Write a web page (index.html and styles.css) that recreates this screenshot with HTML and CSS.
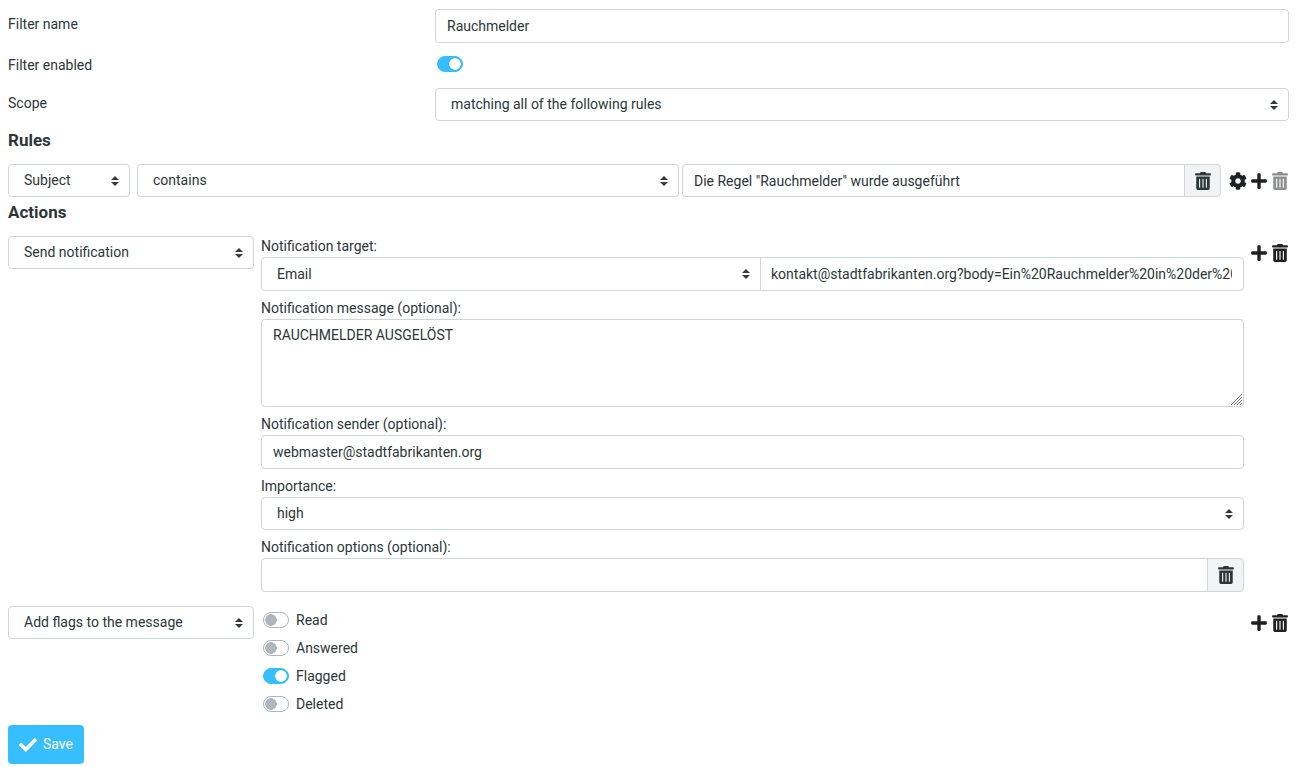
FILE: index.html
```html
<!DOCTYPE html>
<html lang="en">
<head>
<meta charset="UTF-8">
<title>Filters</title>
<link rel="stylesheet" href="styles.css">
</head>
<body>

<!-- Icon sprite -->
<svg class="sprite" aria-hidden="true">
    <symbol id="trash" viewBox="0 0 448 512"><path d="M32 464a48 48 0 0 0 48 48h288a48 48 0 0 0 48-48V128H32zm272-256a16 16 0 0 1 32 0v224a16 16 0 0 1-32 0zm-96 0a16 16 0 0 1 32 0v224a16 16 0 0 1-32 0zm-96 0a16 16 0 0 1 32 0v224a16 16 0 0 1-32 0zM432 32H312l-9.4-18.7A24 24 0 0 0 281.1 0H166.8a23.72 23.72 0 0 0-21.4 13.3L136 32H16A16 16 0 0 0 0 48v32a16 16 0 0 0 16 16h416a16 16 0 0 0 16-16V48a16 16 0 0 0-16-16z"/></symbol>
    <symbol id="plus" viewBox="0 0 448 512"><path d="M416 208H272V64c0-17.67-14.33-32-32-32h-32c-17.67 0-32 14.33-32 32v144H32c-17.67 0-32 14.33-32 32v32c0 17.67 14.33 32 32 32h144v144c0 17.67 14.33 32 32 32h32c17.67 0 32-14.33 32-32V304h144c17.67 0 32-14.33 32-32v-32c0-17.67-14.33-32-32-32z"/></symbol>
    <symbol id="cog" viewBox="0 0 512 512"><path d="M487.4 315.7l-42.6-24.6c4.3-23.2 4.3-47 0-70.2l42.6-24.6c4.9-2.8 7.1-8.6 5.5-14-11.1-35.6-30-67.8-54.7-94.6-3.8-4.1-10-5.1-14.8-2.3L380.8 110c-17.9-15.4-38.5-27.3-60.8-35.1V25.8c0-5.6-3.9-10.5-9.4-11.7-36.7-8.2-74.3-7.8-109.2 0-5.5 1.2-9.4 6.1-9.4 11.7V75c-22.2 7.9-42.8 19.8-60.8 35.1L88.7 85.5c-4.9-2.8-11-1.9-14.8 2.3-24.7 26.7-43.6 58.9-54.7 94.6-1.7 5.4.6 11.2 5.5 14L67.3 221c-4.3 23.2-4.3 47 0 70.2l-42.6 24.6c-4.9 2.8-7.1 8.6-5.5 14 11.1 35.6 30 67.8 54.7 94.6 3.8 4.1 10 5.1 14.8 2.3l42.6-24.6c17.9 15.4 38.5 27.3 60.8 35.1v49.2c0 5.6 3.9 10.5 9.4 11.7 36.7 8.2 74.3 7.8 109.2 0 5.5-1.2 9.4-6.1 9.4-11.7v-49.2c22.2-7.9 42.8-19.8 60.8-35.1l42.6 24.6c4.9 2.8 11 1.9 14.8-2.3 24.7-26.7 43.6-58.9 54.7-94.6 1.5-5.5-.7-11.3-5.6-14.1zM256 336c-44.1 0-80-35.9-80-80s35.9-80 80-80 80 35.9 80 80-35.9 80-80 80z"/></symbol>
    <symbol id="check" viewBox="0 0 512 512"><path d="M173.898 439.404l-166.4-166.4c-9.997-9.997-9.997-26.206 0-36.204l36.203-36.204c9.997-9.998 26.207-9.998 36.204 0L192 312.69 432.095 72.596c9.997-9.997 26.207-9.997 36.204 0l36.203 36.204c9.997 9.997 9.997 26.206 0 36.204l-294.4 294.401c-9.998 9.997-26.207 9.997-36.204-.001z"/></symbol>
</svg>

<form class="filter-form">
    <div class="basics">
        <div class="form-row">
            <label for="filterName">Filter name</label>
            <input type="text" class="control" id="filterName" value="Rauchmelder">
        </div>
        <div class="form-row switch-row">
            <label for="filterEnabled">Filter enabled</label>
            <input type="checkbox" class="switch" id="filterEnabled" checked>
        </div>
        <div class="form-row">
            <label for="scope">Scope</label>
            <select class="control" id="scope">
                <option>matching all of the following rules</option>
                <option>matching any of the following rules</option>
                <option>all messages</option>
            </select>
        </div>
    </div>

    <!-- Rules -->
    <section class="rules">
        <h2>Rules</h2>
        <div class="rule-row">
            <select class="control header-select" aria-label="Header">
                <option>Subject</option>
                <option>From</option>
                <option>To</option>
            </select>
            <div class="rule-match">
                <select class="control" aria-label="Operator">
                    <option>contains</option>
                    <option>not contains</option>
                </select>
                <div class="input-group">
                    <input type="text" class="control" aria-label="Value" value='Die Regel "Rauchmelder" wurde ausgeführt'>
                    <button type="button" class="addon" aria-label="Clear"><svg class="icon"><use href="#trash"/></svg></button>
                </div>
            </div>
            <div class="row-buttons">
                <button type="button" class="icon-btn" aria-label="Advanced options"><svg class="icon"><use href="#cog"/></svg></button>
                <button type="button" class="icon-btn" aria-label="Add rule"><svg class="icon"><use href="#plus"/></svg></button>
                <button type="button" class="icon-btn" aria-label="Delete rule" disabled><svg class="icon"><use href="#trash"/></svg></button>
            </div>
        </div>
    </section>

    <!-- Actions -->
    <section class="actions">
        <h2>Actions</h2>
        <div class="action-row">
            <select class="control action-select" aria-label="Action">
                <option>Send notification</option>
                <option>Add flags to the message</option>
            </select>
            <div class="action-data">
                <div class="field">
                    <label for="target">Notification target:</label>
                    <div class="input-group target-group">
                        <select class="control" id="target">
                            <option>Email</option>
                        </select>
                        <input type="text" class="control" aria-label="Target address" value="kontakt@stadtfabrikanten.org?body=Ein%20Rauchmelder%20in%20der%20">
                    </div>
                </div>
                <div class="field">
                    <label for="message">Notification message (optional):</label>
                    <textarea class="control" id="message">RAUCHMELDER AUSGELÖST</textarea>
                </div>
                <div class="field">
                    <label for="sender">Notification sender (optional):</label>
                    <input type="text" class="control" id="sender" value="webmaster@stadtfabrikanten.org">
                </div>
                <div class="field">
                    <label for="importance">Importance:</label>
                    <select class="control" id="importance">
                        <option>high</option>
                        <option>normal</option>
                        <option>low</option>
                    </select>
                </div>
                <div class="field">
                    <label for="options">Notification options (optional):</label>
                    <div class="input-group">
                        <input type="text" class="control" id="options">
                        <button type="button" class="addon" aria-label="Clear"><svg class="icon"><use href="#trash"/></svg></button>
                    </div>
                </div>
            </div>
            <div class="row-buttons">
                <button type="button" class="icon-btn" aria-label="Add action"><svg class="icon"><use href="#plus"/></svg></button>
                <button type="button" class="icon-btn" aria-label="Delete action"><svg class="icon"><use href="#trash"/></svg></button>
            </div>
        </div>

        <div class="action-row">
            <select class="control action-select" aria-label="Action">
                <option>Add flags to the message</option>
                <option>Send notification</option>
            </select>
            <div class="flags">
                <label class="flag"><input type="checkbox" class="switch"> Read</label>
                <label class="flag"><input type="checkbox" class="switch"> Answered</label>
                <label class="flag"><input type="checkbox" class="switch" checked> Flagged</label>
                <label class="flag"><input type="checkbox" class="switch"> Deleted</label>
            </div>
            <div class="row-buttons">
                <button type="button" class="icon-btn" aria-label="Add action"><svg class="icon"><use href="#plus"/></svg></button>
                <button type="button" class="icon-btn" aria-label="Delete action"><svg class="icon"><use href="#trash"/></svg></button>
            </div>
        </div>
    </section>

    <button type="submit" class="save-btn"><svg class="icon"><use href="#check"/></svg>Save</button>
</form>

</body>
</html>
```
FILE: styles.css
```css
:root {
    --text: #2c363a;
    --border: #ced4da;
    --blue: #37beff;
    --grey: #adb5bd;
    --radius: 4px;
}

* {
    margin: 0; padding: 0;
    box-sizing: border-box;
}

body {
    background: #fff;
    color: var(--text);
    font: 14px/21px Roboto, sans-serif;
}

.sprite {
    display: none;
}

.filter-form {
    padding: 9px 12px 3px 8px;
}

h2 {
    font-size: 17px;
    line-height: 23px;
    font-weight: 700;
    margin-bottom: 12px;
}

/* Form controls */
.control {
    display: block;
    width: 100%;
    min-width: 0;
    height: 34px;
    padding: 5px 11px;
    border: 1px solid var(--border);
    border-radius: var(--radius);
    background: #fff;
    color: var(--text);
    font: inherit;
}

select.control {
    appearance: none;
    height: 33px;
    padding: 0 22px 0 15px;
    background: #fff url("data:image/svg+xml,%3Csvg xmlns='http://www.w3.org/2000/svg' viewBox='0 0 4 5'%3E%3Cpath fill='%23343a40' d='M2 0L0 2h4zm0 5L0 3h4z'/%3E%3C/svg%3E") no-repeat right 10px center / 8px 10px;
}

textarea.control {
    height: 88px;
    resize: vertical;
}

textarea::-webkit-resizer {
    background: url("data:image/svg+xml,%3Csvg xmlns='http://www.w3.org/2000/svg' viewBox='0 0 11 11'%3E%3Cpath fill='none' stroke='%23777' d='M0 11L11 0M3 11L11 3M6 11L11 6M9 11L11 9'/%3E%3C/svg%3E") no-repeat right 1px bottom 1px / 11px 11px;
}

.input-group {
    display: flex;
}

.input-group .control {
    flex: 1;
    height: 34px;
}

.input-group > :not(:first-child) {
    margin-left: -1px;
    border-top-left-radius: 0;
    border-bottom-left-radius: 0;
}

.input-group > :not(:last-child) {
    border-top-right-radius: 0;
    border-bottom-right-radius: 0;
}

.target-group input.control {
    padding-left: 10px;
}

.addon {
    flex: none;
    display: flex;
    align-items: center;
    justify-content: center;
    width: 37px;
    border: 1px solid var(--border);
    border-radius: var(--radius);
    background: #f1f3f5;
    color: var(--text);
}

.icon {
    display: block;
    width: 18px;
    height: 18px;
    fill: currentColor;
}

.icon-btn {
    display: flex;
    align-items: center;
    justify-content: center;
    width: 21px;
    height: 33px;
    border: none;
    background: none;
    color: #1d2124;
    cursor: pointer;
}

.icon-btn:disabled {
    opacity: 0.5;
    cursor: default;
}

.row-buttons {
    display: flex;
    flex: none;
    margin-left: 4px;
}

/* Toggle switch */
.switch {
    appearance: none;
    flex: none;
    width: 26px;
    height: 16px;
    margin-left: 2px;
    border: 1px solid var(--grey);
    border-radius: 8px;
    background: #fff radial-gradient(circle closest-side, var(--grey) 92%, transparent) no-repeat 1px center / 12px 12px;
}

.switch:checked {
    border-color: var(--blue);
    background: var(--blue) radial-gradient(circle closest-side, #fff 92%, transparent) no-repeat 11px center / 12px 12px;
}

/* Name, state and scope */
.basics {
    display: grid;
    gap: 11px;
    padding-right: 1px;
}

.form-row {
    display: grid;
    grid-template-columns: 1fr 2fr;
}

.form-row label {
    padding-top: 5px;
}

.switch-row {
    min-height: 23px;
}

.switch-row label {
    padding-top: 1px;
}

.switch-row .switch {
    margin-top: 2px;
}

/* Rules */
.rules {
    margin-top: 8px;
}

.rule-row {
    display: flex;
}

.rule-row .row-buttons {
    margin-left: 6px;
}

.header-select {
    flex: none;
    width: 122px;
    margin-right: 7px;
}

.rule-match {
    flex: 1;
    display: grid;
    grid-template-columns: 50% 1fr;
    gap: 3px;
}

.rule-match .input-group .control {
    height: 33px;
}

/* Actions */
.actions {
    margin-top: 4px;
}

.action-row {
    display: flex;
    margin-bottom: 14px;
}

.action-row:last-child {
    margin-bottom: 7px;
}

.action-row .action-select {
    flex: none;
    width: 246px;
    margin-right: 7px;
}

.action-data {
    flex: 1;
    display: grid;
    gap: 7px;
}

.field label {
    display: block;
}

.flags {
    flex: 1;
}

.flag {
    display: flex;
    align-items: center;
    gap: 7px;
    height: 28px;
}

.save-btn {
    display: flex;
    align-items: center;
    gap: 6px;
    height: 39px;
    padding: 0 11px;
    border: none;
    border-radius: var(--radius);
    background: var(--blue);
    color: #fff;
    font: inherit;
    cursor: pointer;
}
```
